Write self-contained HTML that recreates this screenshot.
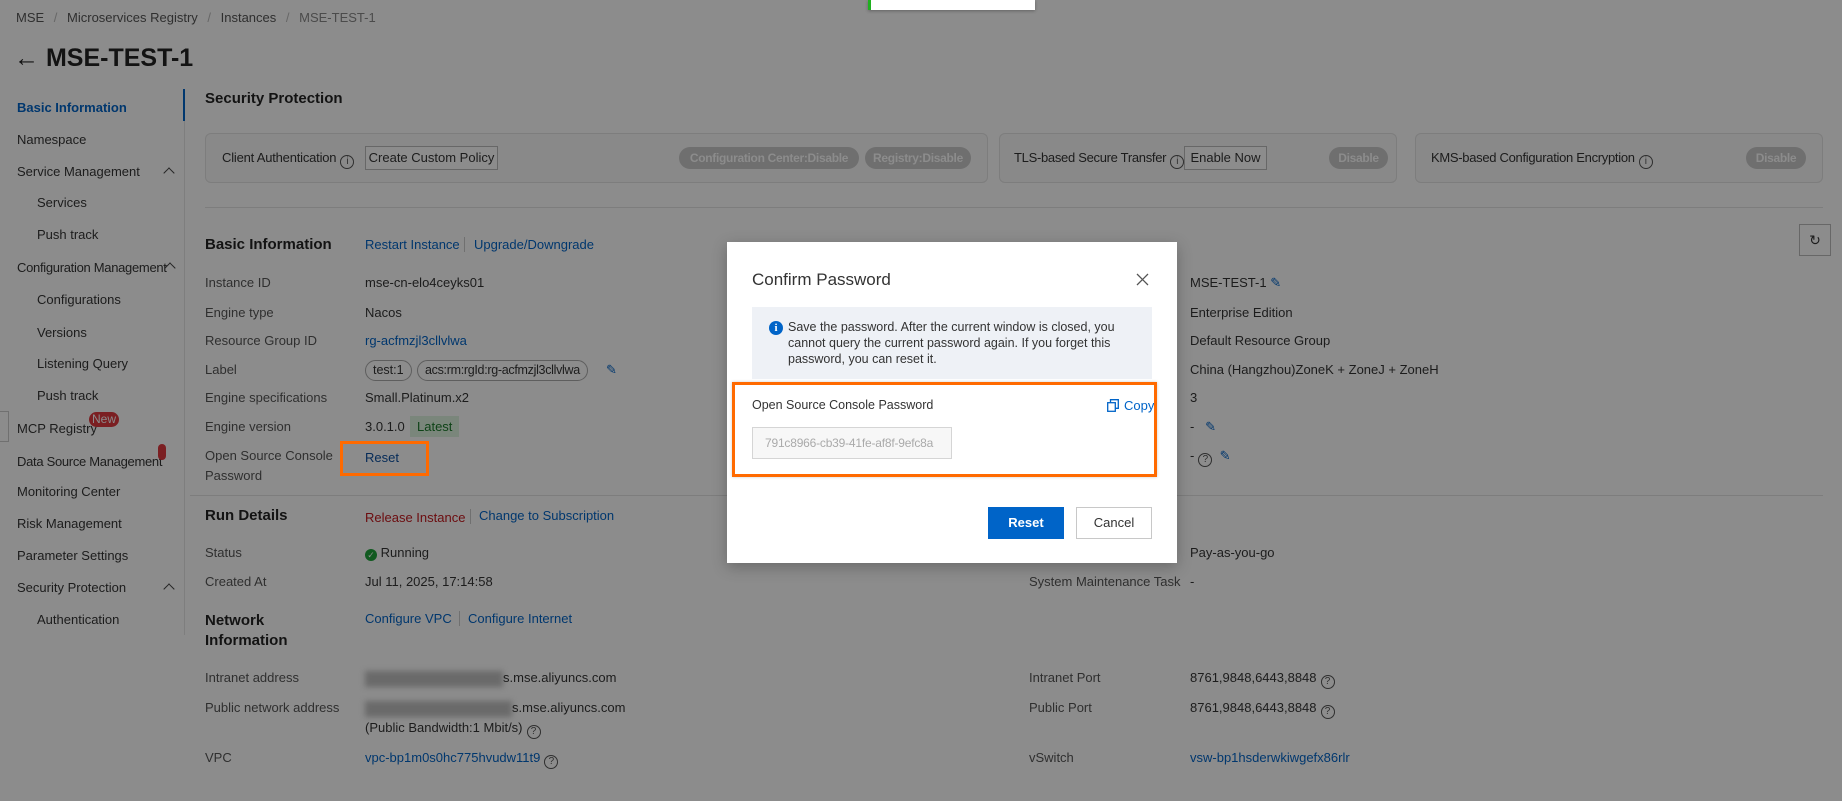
<!DOCTYPE html>
<html><head><meta charset="utf-8">
<style>
*{box-sizing:border-box;margin:0;padding:0}
body{width:1842px;height:801px;position:relative;overflow:hidden;background:#8c8c8c;font-family:"Liberation Sans",sans-serif;font-size:13px;color:#1c1c1c}
.a{position:absolute;white-space:nowrap;line-height:16px}
.l{color:#00376e}
.g{color:#2f2f2f}
.b{font-weight:bold;color:#131313}
.card{position:absolute;top:133px;height:50px;border:1px solid #7d7d7d;border-radius:6px;background:#898989}
.pill{position:absolute;height:22px;line-height:22px;border-radius:11px;background:#6f6f6f;color:#8c8c8c;font-weight:bold;font-size:12px;text-align:center;white-space:nowrap;overflow:hidden;letter-spacing:-0.3px}
.btn{position:absolute;height:24px;line-height:22px;border:1px solid #676767;background:#8c8c8c;color:#1c1c1c;font-size:13px;text-align:center;white-space:nowrap}
.q{display:inline-block;width:14px;height:14px;border:1px solid #2f2f2f;border-radius:50%;font-size:10px;line-height:12px;text-align:center;color:#2f2f2f;vertical-align:-2px;margin-left:4px}
.chev{position:absolute;width:8px;height:8px;border-left:1.5px solid #252525;border-top:1.5px solid #252525;transform:rotate(45deg)}
.blur{position:absolute;background:#6a6a6a;filter:blur(3px)}
.tag{position:absolute;height:21px;line-height:19px;border:1px solid #5e5e5e;border-radius:11px;padding:0 7px;font-size:12.5px;color:#1c1c1c;white-space:nowrap}
.sep{position:absolute;width:1px;height:15px;background:#707070}
</style></head><body>
<div class="a g" style="left:16px;top:10px">MSE <span style="color:#676767;margin:0 6px">/</span> Microservices Registry <span style="color:#676767;margin:0 6px">/</span> Instances <span style="color:#676767;margin:0 6px">/</span> <span style="color:#4b4b4b">MSE-TEST-1</span></div>
<div class="a" style="left:14px;top:42px;font-size:25px;line-height:32px;font-weight:bold;color:#131313">&#8592; MSE-TEST-1</div>

<div style="position:absolute;left:184px;top:89px;width:1px;height:546px;background:#7e7e7e"></div>
<div style="position:absolute;left:183px;top:89px;width:2px;height:32px;background:#00376e"></div>
<div class="a" style="left:17px;top:100px;color:#00376e;font-weight:bold">Basic Information</div>
<div class="a" style="left:17px;top:132px">Namespace</div>
<div class="a" style="left:17px;top:164px">Service Management</div><div class="chev" style="left:165px;top:169px"></div>
<div class="a" style="left:37px;top:195px">Services</div>
<div class="a" style="left:37px;top:227px">Push track</div>
<div class="a" style="left:17px;top:260px;letter-spacing:-0.3px">Configuration Management</div><div class="chev" style="left:166px;top:264px"></div>
<div class="a" style="left:37px;top:292px">Configurations</div>
<div class="a" style="left:37px;top:325px">Versions</div>
<div class="a" style="left:37px;top:356px">Listening Query</div>
<div class="a" style="left:37px;top:388px">Push track</div>
<div class="a" style="left:17px;top:421px">MCP Registry</div>
<div class="a" style="left:89px;top:412px;background:#7b1f22;color:#8c8c8c;border-radius:8px;padding:0 3px;font-size:12px;line-height:15px">New</div>
<div class="a" style="left:17px;top:454px;letter-spacing:-0.3px">Data Source Management</div>
<div style="position:absolute;left:158px;top:444px;width:8px;height:16px;background:#7b1f22;border-radius:5px"></div>
<div class="a" style="left:17px;top:484px">Monitoring Center</div>
<div class="a" style="left:17px;top:516px">Risk Management</div>
<div class="a" style="left:17px;top:548px">Parameter Settings</div>
<div class="a" style="left:17px;top:580px">Security Protection</div><div class="chev" style="left:165px;top:585px"></div>
<div class="a" style="left:37px;top:612px">Authentication</div>
<div style="position:absolute;left:0;top:411px;width:9px;height:31px;border:1px solid #707070;border-left:none;background:#8c8c8c"></div>

<div class="a b" style="left:205px;top:91px;font-size:15px">Security Protection</div>
<div class="card" style="left:205px;width:783px"></div>
<div class="card" style="left:999px;width:398px"></div>
<div class="card" style="left:1415px;width:408px"></div>
<div class="a" style="left:222px;top:150px;letter-spacing:-0.2px">Client Authentication<span class="q">i</span></div>
<div class="btn" style="left:365px;top:146px;width:133px">Create Custom Policy</div>
<div class="pill" style="left:679px;top:147px;width:180px">Configuration Center:Disable</div>
<div class="pill" style="left:865px;top:147px;width:106px">Registry:Disable</div>
<div class="a" style="left:1014px;top:150px;letter-spacing:-0.3px">TLS-based Secure Transfer<span class="q">i</span></div>
<div class="btn" style="left:1184px;top:146px;width:83px">Enable Now</div>
<div class="pill" style="left:1329px;top:147px;width:59px">Disable</div>
<div class="a" style="left:1431px;top:150px;letter-spacing:-0.3px">KMS-based Configuration Encryption<span class="q">i</span></div>
<div class="pill" style="left:1746px;top:147px;width:60px">Disable</div>
<div style="position:absolute;left:205px;top:207px;width:1618px;height:1px;background:#7d7d7d"></div>

<div class="a b" style="left:205px;top:237px;font-size:15px">Basic Information</div>
<div class="a l" style="left:365px;top:237px">Restart Instance</div>
<div class="sep" style="left:464px;top:237px"></div>
<div class="a l" style="left:474px;top:237px">Upgrade/Downgrade</div>
<div style="position:absolute;left:1799px;top:224px;width:32px;height:32px;border:1px solid #676767;text-align:center;line-height:30px;font-size:14px">&#8635;</div>

<div class="a g" style="left:205px;top:275px">Instance ID</div><div class="a" style="left:365px;top:275px">mse-cn-elo4ceyks01</div>
<div class="a g" style="left:205px;top:305px">Engine type</div><div class="a" style="left:365px;top:305px">Nacos</div>
<div class="a g" style="left:205px;top:333px">Resource Group ID</div><div class="a l" style="left:365px;top:333px">rg-acfmzjl3cllvlwa</div>
<div class="a g" style="left:205px;top:362px">Label</div>
<div class="tag" style="left:365px;top:360px">test:1</div>
<div class="tag" style="left:417px;top:360px;letter-spacing:-0.3px">acs:rm:rgId:rg-acfmzjl3cllvlwa</div>
<div class="a l" style="left:606px;top:362px">&#9998;</div>
<div class="a g" style="left:205px;top:390px">Engine specifications</div><div class="a" style="left:365px;top:390px">Small.Platinum.x2</div>
<div class="a g" style="left:205px;top:419px">Engine version</div><div class="a" style="left:365px;top:419px">3.0.1.0</div>
<div class="a" style="left:410px;top:416px;height:21px;line-height:21px;padding:0 7px;background:#7a867b;color:#0e4317">Latest</div>
<div class="a g" style="left:205px;top:448px">Open Source Console</div>
<div class="a g" style="left:205px;top:468px">Password</div>
<div class="a l" style="left:365px;top:450px;color:#052b58">Reset</div>

<div class="a" style="left:1190px;top:275px">MSE-TEST-1 <span class="l">&#9998;</span></div>
<div class="a" style="left:1190px;top:305px">Enterprise Edition</div>
<div class="a" style="left:1190px;top:333px">Default Resource Group</div>
<div class="a" style="left:1190px;top:362px">China (Hangzhou)ZoneK + ZoneJ + ZoneH</div>
<div class="a" style="left:1190px;top:390px">3</div>
<div class="a" style="left:1190px;top:419px">- &nbsp;&nbsp;<span class="l">&#9998;</span></div>
<div class="a" style="left:1190px;top:448px">-<span class="q">?</span> &nbsp;<span class="l">&#9998;</span></div>
<div style="position:absolute;left:190px;top:495px;width:1633px;height:1px;background:#7d7d7d"></div>

<div class="a b" style="left:205px;top:508px;font-size:15px">Run Details</div>
<div class="a" style="left:365px;top:510px;color:#6c0c0f">Release Instance</div>
<div class="sep" style="left:470px;top:509px"></div>
<div class="a l" style="left:479px;top:508px">Change to Subscription</div>
<div class="a g" style="left:205px;top:545px">Status</div>
<div class="a" style="left:365px;top:545px"><span style="display:inline-block;width:12px;height:12px;border-radius:50%;background:#115a20;color:#8c8c8c;font-size:9px;line-height:12px;text-align:center;vertical-align:-1px">&#10003;</span> Running</div>
<div class="a g" style="left:205px;top:574px">Created At</div><div class="a" style="left:365px;top:574px">Jul 11, 2025, 17:14:58</div>
<div class="a" style="left:1190px;top:545px">Pay-as-you-go</div>
<div class="a g" style="left:1029px;top:574px">System Maintenance Task</div><div class="a" style="left:1190px;top:574px">-</div>

<div class="a b" style="left:205px;top:611px;font-size:15px;line-height:20px">Network<br>Information</div>
<div class="a l" style="left:365px;top:611px">Configure VPC</div>
<div class="sep" style="left:459px;top:611px"></div>
<div class="a l" style="left:468px;top:611px">Configure Internet</div>

<div class="a g" style="left:205px;top:670px">Intranet address</div>
<div class="blur" style="left:365px;top:671px;width:138px;height:16px"></div>
<div class="a" style="left:503px;top:670px">s.mse.aliyuncs.com</div>
<div class="a g" style="left:205px;top:700px">Public network address</div>
<div class="blur" style="left:365px;top:701px;width:147px;height:16px"></div>
<div class="a" style="left:512px;top:700px">s.mse.aliyuncs.com</div>
<div class="a" style="left:365px;top:720px">(Public Bandwidth:1 Mbit/s)<span class="q">?</span></div>
<div class="a g" style="left:205px;top:750px">VPC</div>
<div class="a" style="left:365px;top:750px"><span class="l">vpc-bp1m0s0hc775hvudw11t9</span><span class="q">?</span></div>
<div class="a g" style="left:1029px;top:670px">Intranet Port</div><div class="a" style="left:1190px;top:670px">8761,9848,6443,8848<span class="q">?</span></div>
<div class="a g" style="left:1029px;top:700px">Public Port</div><div class="a" style="left:1190px;top:700px">8761,9848,6443,8848<span class="q">?</span></div>
<div class="a g" style="left:1029px;top:750px">vSwitch</div><div class="a l" style="left:1190px;top:750px">vsw-bp1hsderwkiwgefx86rlr</div>

<div style="position:absolute;left:868px;top:0;width:167px;height:10px;background:#fff;border-left:3px solid #1fb01f;box-shadow:0 1px 3px rgba(0,0,0,.3)"></div>
<div style="position:absolute;left:340px;top:441px;width:89px;height:35px;border:3px solid #ff6a00"></div>

<div style="position:absolute;left:727px;top:242px;width:450px;height:321px;background:#fff;box-shadow:0 4px 14px rgba(0,0,0,.25)">
  <div class="a" style="left:25px;top:28px;font-size:17px;line-height:20px;color:#333">Confirm Password</div>
  <svg style="position:absolute;left:409px;top:31px" width="13" height="13" viewBox="0 0 13 13"><path d="M1 1L12 12M12 1L1 12" stroke="#555" stroke-width="1.3"/></svg>
  <div style="position:absolute;left:25px;top:65px;width:400px;height:72px;background:#eef1f6"></div>
  <div style="position:absolute;left:42px;top:79px;width:14px;height:14px;border-radius:50%;background:#0064c8;color:#fff;font-size:11px;font-weight:bold;line-height:14px;text-align:center;font-family:'Liberation Serif',serif">i</div>
  <div style="position:absolute;left:61px;top:77px;width:345px;font-size:12.5px;line-height:16px;color:#333">Save the password. After the current window is closed, you cannot query the current password again. If you forget this password, you can reset it.</div>
  <div class="a" style="left:25px;top:155px;font-size:12.5px;color:#333">Open Source Console Password</div>
  <svg style="position:absolute;left:380px;top:157px" width="12" height="13" viewBox="0 0 12 13"><rect x="0.7" y="3.7" width="7.6" height="8.6" fill="none" stroke="#0064c8" stroke-width="1.3"/><path d="M3.5 3.5V0.7H11.3V9.3H8.5" fill="none" stroke="#0064c8" stroke-width="1.3"/></svg>
  <div class="a" style="left:397px;top:156px;font-size:13px;color:#0064c8">Copy</div>
  <div style="position:absolute;left:25px;top:185px;width:200px;height:32px;border:1px solid #d5d5d5;background:#f7f7f7;color:#aaa;font-size:12px;line-height:30px;padding-left:12px;white-space:nowrap;overflow:hidden;letter-spacing:-0.2px">791c8966-cb39-41fe-af8f-9efc8a</div>
  <div style="position:absolute;left:261px;top:265px;width:76px;height:32px;background:#0064c8;color:#fff;font-weight:bold;text-align:center;line-height:32px;font-size:13px">Reset</div>
  <div style="position:absolute;left:349px;top:265px;width:76px;height:32px;border:1px solid #c8c8c8;color:#333;text-align:center;line-height:30px;font-size:13px">Cancel</div>
</div>
<div style="position:absolute;left:732px;top:382px;width:425px;height:95px;border:3px solid #ff6a00;box-shadow:0 0 3px rgba(0,0,0,.2)"></div>
</body></html>
